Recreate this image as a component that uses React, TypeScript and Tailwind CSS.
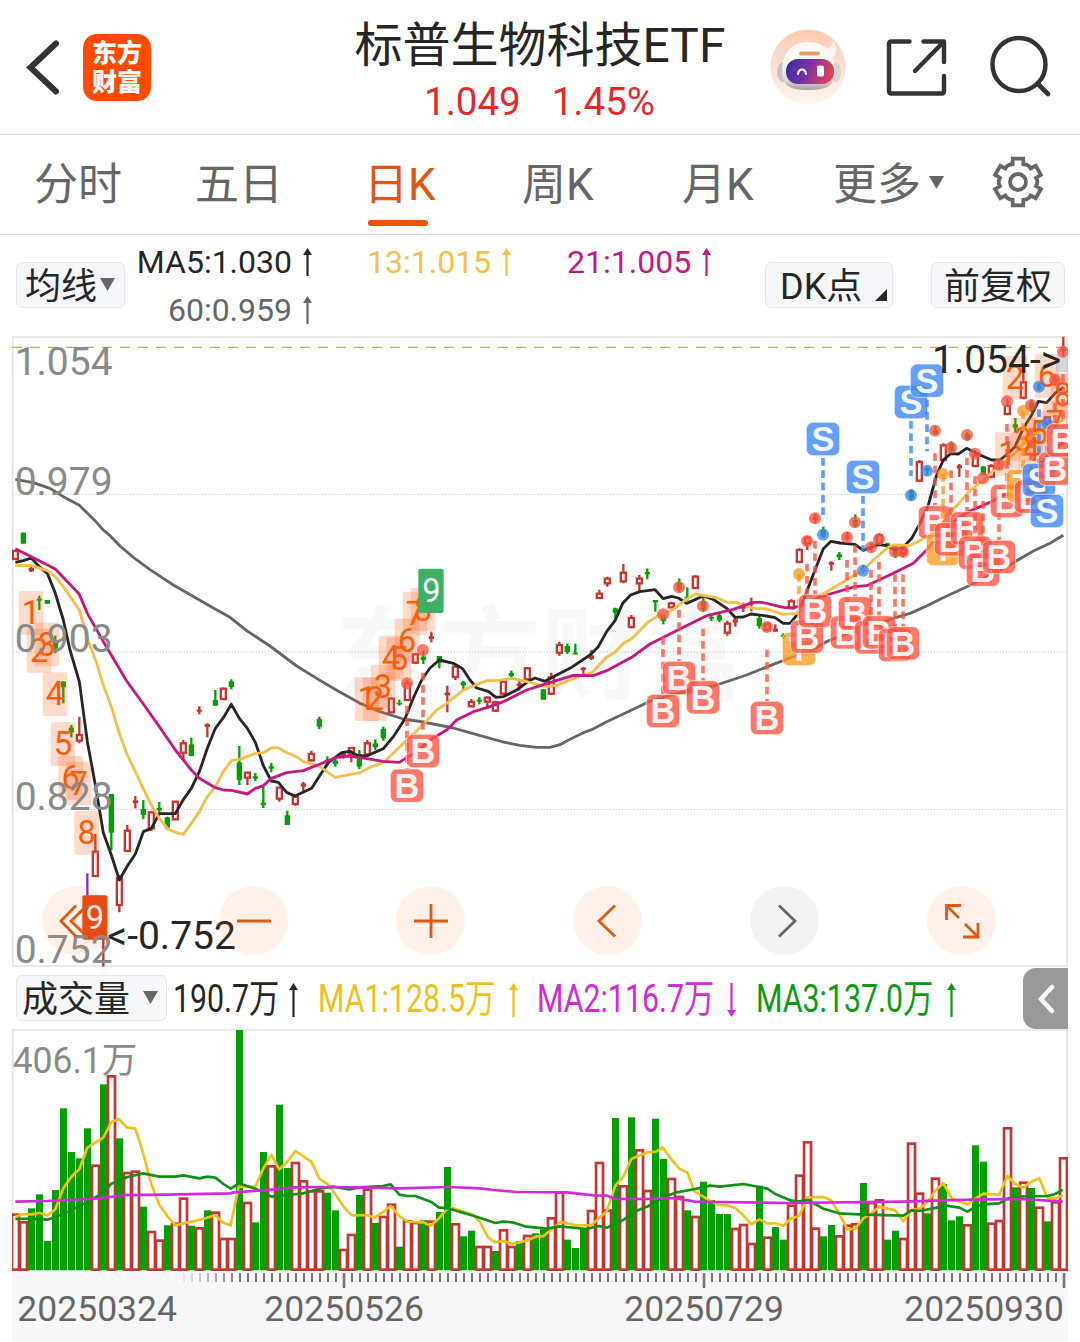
import React from "react";

type Tone = "R" | "G" | "P";

// Charts are drawn in thirds of a pixel, one bar every 24 units.
const barX = (i: number) => 46 + 24 * i;

const UP = "#c53532";
const DOWN = "#049f04";
const FONT = "Roboto, 'Noto Sans CJK SC', sans-serif";

// index, tone, high, low, body top, body bottom
const candles: [number, Tone, number, number, number, number][] = [
  [0, "R", 660, 690, 663, 687],
  [1, "G", 608, 641, 608, 641],
  [2, "R", 710, 726, 714, 724],
  [3, "G", 797, 840, 806, 812],
  [4, "G", 810, 821, 810, 821],
  [5, "G", 917, 970, 930, 955],
  [6, "G", 1053, 1120, 1055, 1072],
  [7, "G", 1185, 1222, 1193, 1207],
  [8, "R", 1160, 1240, 1215, 1232],
  [9, "P", 1630, 1697, 1660, 1660],
  [10, "R", 1512, 1640, 1565, 1638],
  [11, "R", 1820, 1910, 1850, 1852],
  [12, "G", 1392, 1560, 1392, 1508],
  [13, "R", 1635, 1747, 1645, 1725],
  [14, "R", 1485, 1565, 1502, 1563],
  [15, "R", 1398, 1435, 1411, 1419],
  [16, "G", 1410, 1467, 1437, 1455],
  [17, "R", 1445, 1503, 1447, 1495],
  [18, "G", 1416, 1452, 1434, 1441],
  [19, "G", 1460, 1499, 1462, 1495],
  [20, "R", 1413, 1470, 1415, 1468],
  [21, "R", 1230, 1290, 1240, 1268],
  [22, "G", 1223, 1279, 1243, 1278],
  [23, "R", 1129, 1153, 1139, 1145],
  [24, "R", 1180, 1222, 1182, 1191],
  [25, "G", 1080, 1127, 1110, 1127],
  [26, "R", 1073, 1110, 1076, 1107],
  [27, "G", 1048, 1078, 1054, 1071],
  [28, "G", 1248, 1365, 1297, 1350],
  [29, "R", 1325, 1365, 1328, 1343],
  [30, "G", 1329, 1353, 1339, 1346],
  [31, "G", 1367, 1434, 1418, 1425],
  [32, "G", 1299, 1327, 1309, 1316],
  [33, "R", 1370, 1415, 1373, 1406],
  [34, "G", 1442, 1485, 1456, 1485],
  [35, "R", 1398, 1427, 1400, 1422],
  [36, "R", 1356, 1387, 1360, 1370],
  [37, "R", 1262, 1294, 1272, 1291],
  [38, "G", 1160, 1197, 1167, 1190],
  [39, "G", 1279, 1305, 1289, 1296],
  [40, "G", 1285, 1310, 1292, 1302],
  [41, "R", 1266, 1286, 1270, 1280],
  [42, "R", 1251, 1297, 1254, 1274],
  [43, "G", 1260, 1317, 1272, 1310],
  [44, "R", 1230, 1276, 1240, 1273],
  [45, "G", 1228, 1260, 1240, 1252],
  [46, "G", 1190, 1232, 1197, 1225],
  [47, "R", 1102, 1150, 1106, 1147],
  [48, "G", 1109, 1127, 1118, 1123],
  [49, "R", 1050, 1112, 1060, 1110],
  [50, "R", 969, 1001, 973, 998],
  [51, "G", 962, 1002, 980, 990],
  [52, "R", 905, 937, 918, 927],
  [53, "G", 978, 1015, 978, 998],
  [54, "R", 1067, 1147, 1088, 1096],
  [55, "R", 1006, 1050, 1010, 1041],
  [56, "G", 1053, 1080, 1056, 1066],
  [57, "R", 1107, 1132, 1116, 1129],
  [58, "G", 1101, 1123, 1109, 1115],
  [59, "R", 1099, 1138, 1103, 1115],
  [60, "R", 1112, 1146, 1117, 1142],
  [61, "R", 1051, 1094, 1055, 1091],
  [62, "G", 1022, 1043, 1029, 1038],
  [63, "R", 1053, 1082, 1060, 1068],
  [64, "R", 1011, 1052, 1015, 1048],
  [66, "G", 1077, 1109, 1078, 1109],
  [67, "R", 1028, 1095, 1042, 1091],
  [68, "R", 935, 977, 945, 968],
  [69, "G", 941, 972, 948, 966],
  [70, "G", 941, 973, 968, 973],
  [71, "R", 1011, 1036, 1013, 1020],
  [72, "R", 960, 990, 976, 987],
  [73, "R", 779, 807, 791, 804],
  [74, "R", 740, 770, 746, 760],
  [75, "G", 833, 864, 835, 848],
  [76, "R", 702, 760, 728, 754],
  [77, "R", 855, 895, 864, 891],
  [78, "R", 735, 783, 746, 760],
  [79, "G", 715, 748, 726, 733],
  [80, "G", 810, 845, 810, 817],
  [81, "G", 845, 883, 855, 873],
  [82, "R", 815, 835, 820, 832],
  [83, "G", 745, 787, 757, 780],
  [84, "G", 772, 812, 800, 806],
  [85, "R", 736, 777, 740, 774],
  [86, "G", 798, 846, 815, 838],
  [87, "G", 852, 873, 861, 866],
  [88, "G", 850, 876, 856, 871],
  [89, "R", 872, 917, 881, 908],
  [90, "R", 862, 890, 868, 878],
  [91, "R", 818, 846, 830, 836],
  [92, "R", 803, 844, 815, 824],
  [93, "G", 856, 896, 864, 888],
  [94, "R", 878, 904, 882, 900],
  [95, "R", 883, 905, 896, 905],
  [96, "G", 910, 927, 915, 920],
  [97, "R", 808, 836, 814, 834],
  [98, "R", 655, 699, 660, 696],
  [99, "R", 618, 660, 624, 640],
  [100, "R", 552, 580, 560, 570],
  [101, "G", 590, 624, 600, 620],
  [102, "R", 694, 722, 696, 704],
  [103, "G", 666, 690, 673, 682],
  [104, "R", 606, 632, 616, 626],
  [105, "G", 553, 592, 570, 588],
  [106, "G", 704, 730, 714, 724],
  [107, "R", 640, 664, 648, 654],
  [108, "R", 610, 648, 616, 640],
  [109, "G", 638, 652, 640, 648],
  [110, "G", 650, 684, 654, 676],
  [111, "R", 648, 682, 658, 672],
  [112, "G", 478, 512, 482, 508],
  [113, "R", 390, 455, 396, 452],
  [114, "G", 410, 436, 414, 420],
  [115, "G", 288, 316, 300, 312],
  [116, "R", 340, 395, 346, 390],
  [117, "G", 334, 368, 340, 364],
  [118, "R", 402, 441, 406, 415],
  [119, "G", 306, 332, 312, 328],
  [120, "R", 360, 412, 376, 408],
  [121, "G", 408, 436, 410, 434],
  [122, "R", 403, 445, 408, 440],
  [123, "R", 395, 418, 400, 410],
  [124, "R", 205, 256, 228, 252],
  [125, "G", 264, 308, 283, 293],
  [126, "R", 95, 208, 157, 203],
  [127, "G", 208, 246, 216, 238],
  [128, "G", 158, 182, 170, 178],
  [129, "R", 260, 290, 262, 280],
  [130, "R", 136, 166, 146, 154],
  [131, "R", 20, 80, 55, 63],
];

const ma60 =
  "46,448 100,458 150,475 190,500 238,526 285,572 310,600 330,617 360,648 400,682 450,719 520,765 640,834 690,862 740,902 810,948 890,1008 960,1051 1010,1081 1080,1120 1140,1145 1210,1167 1270,1176 1360,1194 1430,1214 1510,1236 1560,1246 1610,1252 1650,1252 1680,1244 1700,1233 1750,1208 1775,1199 1820,1175 1870,1152 1950,1114 2020,1093 2150,1065 2240,1035 2320,1003 2380,980 2430,963 2480,935 2550,907 2680,865 2730,850 2780,828 2820,808 2910,766 3020,710 3050,692 3100,663 3150,640 3190,616";
const ma5 =
  "46,697 70,692 94,684 118,710 142,730 166,790 190,870 210,960 238,1055 262,1235 286,1365 310,1508 334,1575 358,1650 382,1608 406,1572 430,1505 454,1495 478,1451 526,1451 550,1409 574,1375 598,1325 622,1255 646,1195 670,1163 694,1123 718,1165 742,1195 766,1237 790,1307 814,1353 835,1357 860,1387 885,1398 935,1375 960,1336 985,1298 1025,1268 1050,1264 1075,1278 1100,1278 1150,1256 1180,1220 1215,1166 1240,1104 1265,1050 1290,1014 1318,990 1360,1000 1388,1016 1410,1050 1430,1074 1465,1084 1488,1102 1510,1100 1550,1080 1585,1054 1605,1044 1635,1054 1670,1035 1710,1015 1770,975 1795,950 1820,905 1845,872 1868,820 1892,795 1920,785 1965,779 1990,806 2015,799 2035,804 2060,820 2110,798 2140,808 2180,835 2205,862 2230,861 2253,852 2300,858 2325,863 2350,880 2370,880 2395,850 2420,785 2445,720 2470,656 2493,634 2520,639 2565,643 2590,661 2635,644 2660,647 2685,660 2710,652 2735,625 2760,580 2785,525 2810,435 2830,390 2852,371 2875,372 2900,355 2940,375 2975,390 3000,390 3025,370 3045,350 3070,295 3095,255 3115,214 3140,218 3165,190 3190,172";
const ma13 =
  "46,707 94,706 142,722 166,740 190,770 238,840 262,925 290,1000 310,1065 334,1130 358,1210 382,1275 406,1325 430,1377 454,1425 478,1465 502,1495 526,1507 550,1513 574,1480 598,1445 622,1400 646,1370 670,1325 694,1292 718,1288 766,1270 790,1268 814,1254 835,1253 860,1268 885,1278 910,1294 960,1310 1005,1342 1080,1328 1110,1312 1150,1298 1210,1240 1265,1188 1310,1140 1340,1120 1390,1080 1460,1052 1490,1052 1535,1045 1580,1055 1640,1070 1670,1066 1710,1050 1750,1035 1775,1028 1820,982 1845,967 1870,940 1895,926 1945,875 1970,860 2020,838 2050,815 2085,792 2150,803 2180,817 2210,818 2255,834 2300,837 2350,853 2390,850 2420,820 2480,785 2540,750 2590,720 2620,690 2660,655 2680,645 2730,646 2760,632 2800,605 2840,555 2875,522 2910,482 2950,450 3000,405 3040,375 3080,330 3140,290 3190,270";
const ma21 =
  "46,656 94,680 166,717 238,793 262,850 310,935 325,960 380,1053 430,1122 478,1190 526,1260 574,1320 598,1345 646,1373 670,1380 694,1381 742,1392 766,1375 790,1367 814,1345 860,1328 910,1322 960,1302 1010,1282 1050,1278 1100,1286 1150,1294 1198,1297 1250,1265 1290,1230 1340,1200 1370,1170 1420,1145 1470,1130 1510,1115 1580,1080 1630,1064 1720,1036 1780,1037 1820,1022 1895,982 1950,942 2050,892 2120,857 2200,838 2260,817 2285,817 2350,832 2380,834 2420,818 2480,795 2565,770 2600,767 2680,730 2740,700 2780,660 2820,610 2880,560 2910,543 2970,517 3020,490 3100,430 3140,380 3190,335";

const priceLines = [
  { points: ma60, color: "#666666" },
  { points: ma5, color: "#262626" },
  { points: ma13, color: "#f3bf4b" },
  { points: ma21, color: "#c5187f" },
];

type Kind = "B" | "S" | "T";
const kindColor: Record<Kind, string> = {
  B: "#fb5541",
  S: "#3a87f5",
  T: "#ff9b20",
};

// kind, bar index, dot y, badge y
const signals: [Kind, number, number, number][] = [
  ["B", 49, 1060, 1367],
  ["B", 51, 960, 1263],
  ["B", 81, 853, 1143],
  ["B", 83, 772, 1044],
  ["B", 86, 828, 1102],
  ["B", 94, 891, 1164],
  ["T", 98, 732, 957],
  ["B", 99, 633, 920],
  ["B", 100, 565, 843],
  ["S", 101, 614, 327],
  ["B", 104, 622, 907],
  ["B", 105, 577, 850],
  ["S", 106, 722, 441],
  ["B", 107, 652, 922],
  ["B", 108, 628, 907],
  ["B", 110, 665, 945],
  ["B", 111, 665, 940],
  ["S", 112, 496, 216],
  ["S", 114, 422, 152],
  ["B", 115, 302, 577],
  ["T", 116, 432, 657],
  ["B", 117, 353, 628],
  ["B", 119, 315, 595],
  ["B", 120, 371, 668],
  ["B", 121, 445, 719],
  ["B", 123, 404, 681],
  ["B", 124, 214, 513],
  ["T", 126, 243, 468],
  ["B", 127, 226, 500],
  ["S", 128, 170, 450],
  ["S", 129, 280, 543],
  ["B", 130, 150, 416],
  ["B", 131, 65, 331],
];

// digit, box left, box top
const counts: [string, number, number][] = [
  ["1", 56, 783],
  ["2", 80, 897],
  ["3", 104, 878],
  ["4", 128, 1027],
  ["5", 152, 1177],
  ["6", 175, 1278],
  ["7", 199, 1295],
  ["8", 223, 1443],
  ["1", 1064, 1042],
  ["2", 1088, 1042],
  ["3", 1112, 1004],
  ["4", 1136, 917],
  ["5", 1160, 922],
  ["6", 1184, 866],
  ["7", 1208, 785],
  ["8", 1232, 773],
  ["1", 2985, 307],
  ["2", 3008, 78],
  ["3", 3032, 263],
  ["4", 3056, 295],
  ["5", 3080, 243],
  ["6", 3104, 72],
  ["7", 3128, 212],
  ["8", 3152, 130],
];

// tone and top of each bar; the base line is at 931
const volumes =
  "R760 R783 G745 G703 G843 G690 G445 G576 G595 G505 R613 G373 R345 G535 R635 R631 G740 R812 R838 G796 R787 R712 G797 R801 G751 R754 R833 R833 G210 R725 G787 G576 R615 G434 G624 R605 R660 R690 R690 G698 G751 R866 R821 G705 R685 G789 R767 R730 G860 R780 R785 G781 R781 G756 G621 R789 G829 G812 R857 R857 G873 R807 R857 G843 R824 G820 G808 R771 R694 G839 G864 G805 R749 R605 R748 G474 R675 G472 R567 R689 G476 G597 R653 R707 G751 R767 G665 G720 G762 G762 R803 R791 R848 G677 R829 G801 G839 R733 R643 R543 R802 G829 G795 R825 R793 R789 G669 R725 R717 G839 G812 R833 R547 R697 G760 R652 G672 G781 G769 R792 G556 G605 R787 R779 R501 G682 R664 G684 R739 G784 R723 R591".split(
    " "
  );

const volumeLines = [
  {
    color: "#efc01c",
    points:
      "46,770 70,762 94,763 118,759 142,766 166,748 190,685 214,650 238,628 262,563 286,548 310,532 334,487 356,477 380,502 406,506 430,582 454,672 478,735 502,768 526,796 550,790 598,780 646,766 670,788 692,796 716,680 766,680 790,625 814,585 838,628 862,605 886,573 934,605 958,656 984,673 1008,706 1032,742 1056,766 1100,765 1124,773 1148,757 1172,738 1198,768 1222,785 1270,787 1292,797 1316,776 1340,748 1358,744 1420,765 1440,786 1464,832 1486,847 1510,843 1536,852 1580,842 1610,829 1630,829 1682,786 1730,796 1774,795 1820,754 1846,677 1870,650 1894,597 1942,577 1968,575 1988,562 2014,598 2038,626 2062,638 2084,695 2130,722 2160,735 2182,736 2206,744 2230,766 2254,793 2278,778 2302,790 2326,790 2350,797 2374,775 2398,768 2422,712 2470,711 2494,721 2518,762 2542,808 2566,806 2590,775 2614,760 2638,740 2686,752 2710,784 2734,750 2758,746 2782,727 2806,692 2830,669 2854,714 2878,725 2902,733 2926,716 2950,701 2998,704 3022,648 3046,672 3070,683 3094,665 3118,655 3142,713 3166,716 3188,706",
  },
  {
    color: "#0f8f14",
    points:
      "46,777 94,776 142,779 190,762 238,738 286,712 310,698 334,671 382,651 430,640 478,650 526,650 550,646 598,655 622,650 646,653 670,672 692,686 716,670 766,686 814,710 910,700 958,686 1000,680 1048,688 1080,682 1148,678 1172,673 1198,704 1222,708 1246,708 1294,726 1316,742 1348,746 1420,767 1486,789 1510,785 1536,787 1580,800 1640,806 1680,799 1760,807 1796,798 1822,803 1846,790 1870,780 1910,752 1946,738 1990,712 2030,697 2086,687 2130,677 2160,680 2230,672 2278,681 2302,686 2326,702 2374,722 2398,724 2424,720 2470,746 2518,760 2590,764 2710,767 2734,751 2758,753 2800,745 2838,737 2878,743 2902,755 2926,741 2950,733 2998,730 3022,716 3070,709 3142,708 3166,702 3188,689",
  },
  {
    color: "#d02bd6",
    points:
      "46,725 142,723 286,716 380,705 500,704 692,700 700,697 790,691 884,682 960,681 1080,682 1200,685 1350,681 1440,685 1480,690 1550,696 1700,697 1780,706 1822,707 1846,717 1940,717 2020,714 2086,725 2160,726 2360,729 2710,725 2830,721 2950,718 3070,717 3188,725",
  },
];

const dates = [
  { text: "20250324", x: 52 },
  { text: "20250526", x: 793 },
  { text: "20250729", x: 1873 },
  { text: "20250930", x: 2713 },
];

const Triangle: React.FC = () => (
  <svg width="15" height="13" viewBox="0 0 15 13">
    <path d="M0 0h15L7.5 13z" fill="#666" />
  </svg>
);

const Arrow: React.FC<{ height: number; down?: boolean }> = ({
  height,
  down = false,
}) => (
  <svg
    width="9"
    height={height}
    viewBox={`0 0 9 ${height}`}
    className={down ? "rotate-180" : ""}
  >
    <path d="M4.5 0L9 7H0z" fill="currentColor" />
    <path d={`M4.5 4V${height}`} stroke="currentColor" strokeWidth="2.2" />
  </svg>
);

const Robot: React.FC = () => (
  <svg width="76" height="76" viewBox="0 0 76 76">
    <defs>
      <linearGradient id="halo" x1="0" y1="0" x2="0" y2="1">
        <stop offset="0" stopColor="#fdc9ae" />
        <stop offset="1" stopColor="#fff6f1" />
      </linearGradient>
      <linearGradient id="visor" x1="0" y1="0" x2="1" y2="0.2">
        <stop offset="0" stopColor="#2f2fa4" />
        <stop offset="0.5" stopColor="#7a2fa8" />
        <stop offset="1" stopColor="#dc4358" />
      </linearGradient>
      <linearGradient id="shell" x1="0" y1="0" x2="0" y2="1">
        <stop offset="0.4" stopColor="#fbf8f6" />
        <stop offset="0.8" stopColor="#dcd6d6" />
        <stop offset="1" stopColor="#a9a1a3" />
      </linearGradient>
    </defs>
    <circle cx="38" cy="38" r="37.5" fill="url(#halo)" />
    <path d="M8 17c-1 7 2 12 8 13l6-9c-7 1-11 0-14-4z" fill="#e6dcd9" />
    <path d="M63 12c5 6 4 14-1 17l-9-9c6 0 9-3 10-8z" fill="#fbf5f2" />
    <ellipse cx="13" cy="43" rx="6" ry="10" fill="#c9c0c1" />
    <ellipse cx="66" cy="43" rx="5" ry="10" fill="#ddd4d4" />
    <path
      d="M38 13c17 0 27 11 27 29 0 14-7 19-27 19S12 56 12 42c0-18 10-29 26-29z"
      fill="url(#shell)"
    />
    <rect x="29" y="22.5" width="21" height="4" rx="2" fill="#e0a06c" />
    <rect x="16" y="30" width="48" height="25" rx="12" fill="url(#visor)" />
    <path
      d="M28 45c1-6 7-6 8 0"
      fill="none"
      stroke="#fff"
      strokeWidth="2.2"
      strokeLinecap="round"
    />
    <rect x="47" y="36.5" width="7" height="11" rx="2" fill="#fff" />
  </svg>
);

const Header: React.FC = () => (
  <header className="flex h-[135px] border-b border-[#d6d6d6]">
    <svg className="mt-[38px] ml-6 h-[60px] w-10" viewBox="0 0 40 60">
      <path
        d="M32 5.500L6.500 29.500L32 53.500"
        fill="none"
        stroke="#333"
        strokeWidth="6"
        strokeLinecap="round"
      />
    </svg>
    <div className="mt-[34px] ml-[19px] flex h-[67px] w-[68px] flex-col items-center justify-center rounded-[14px] bg-[#ff4a00] text-[25px] leading-[29px] font-black text-white">
      <span>东方</span>
      <span>财富</span>
    </div>
    <div className="ml-[173px] w-[432px] text-center">
      <h1 className="mt-[11px] text-[48px] leading-[70px] whitespace-nowrap text-[#262626]">
        标普生物科技ETF
      </h1>
      <p className="flex gap-[31px] pl-[100px] text-[38.5px] leading-[42px] text-[#dc2c2c]">
        <span>1.049</span>
        <span>1.45%</span>
      </p>
    </div>
    <div className="mt-[29px] ml-[14px] flex">
      <Robot />
      <svg className="ml-[40px] h-[60px] w-[62px] translate-y-2" viewBox="0 0 62 60">
        <path
          d="M23.500 4.500H5.500Q3 4.500 3 7V54Q3 56.500 5.500 56.500H55.500Q58 56.500 58 54V39M37.500 4.500H58V25M57.500 5L29 34"
          fill="none"
          stroke="#333"
          strokeWidth="4.400"
          strokeLinecap="round"
          strokeLinejoin="round"
        />
      </svg>
      <svg className="ml-[41px] h-[64px] w-[64px] translate-y-[6px]" viewBox="0 0 64 64">
        <circle cx="30" cy="29.500" r="26.500" fill="none" stroke="#333" strokeWidth="4.400" />
        <path d="M48.500 48.500L59 59" stroke="#333" strokeWidth="4.600" strokeLinecap="round" />
      </svg>
    </div>
  </header>
);

const Gear: React.FC = () => {
  const points: string[] = [];
  for (let k = 0; k < 6; k++) {
    const base = -90 + k * 60;
    [
      [-25, 19.3],
      [-17, 18.5],
      [-12.5, 24],
      [12.5, 24],
      [17, 18.5],
      [25, 19.3],
    ].forEach(([a, r]) => {
      const t = ((base + a) * Math.PI) / 180;
      points.push(`${28 + r * Math.cos(t)},${28 + r * Math.sin(t)}`);
    });
  }
  return (
    <svg width="56" height="56" viewBox="0 0 56 56" fill="none" stroke="#666" strokeWidth="3.8">
      <polygon points={points.join(" ")} />
      <circle cx="28" cy="28" r="8" />
    </svg>
  );
};

const Tabs: React.FC = () => (
  <nav className="flex h-[100px] border-b border-[#d6d6d6] text-[44px] leading-[100px] whitespace-nowrap text-[#666]">
    <span className="ml-[34px] w-[161px]">分时</span>
    <span className="w-[169px]">五日</span>
    <span className="flex w-[158px] flex-col text-[#e0560f]">
      <span className="h-[85px]">日K</span>
      <span className="ml-1 h-[6px] w-[60px] rounded-full bg-[#ea5504]" />
    </span>
    <span className="w-[160px]">周K</span>
    <span className="w-[151px]">月K</span>
    <span className="flex w-[157px] items-center">
      更多
      <span className="mb-1 ml-2">
        <Triangle />
      </span>
    </span>
    <span className="mt-[19px]">
      <Gear />
    </span>
  </nav>
);

const Pill: React.FC<{ className: string; children: React.ReactNode }> = ({
  className,
  children,
}) => (
  <div
    className={`flex h-[46px] items-center rounded-md border-[1.5px] border-[#e4e6ea] bg-[#f6f7fa] pt-[3px] text-[36px] leading-none whitespace-nowrap text-[#262626] ${className}`}
  >
    {children}
  </div>
);

const AverageRow: React.FC = () => (
  <div className="flex h-[101px] text-[32px] leading-[48px]">
    <Pill className="mt-[27px] ml-4 w-[109px] pl-2">
      均线
      <span className="mb-1 ml-[3px] flex">
        <Triangle />
      </span>
    </Pill>
    <div className="ml-[11px] flex w-[176px] flex-col items-end pt-[3px]">
      <span className="flex items-center gap-[11px] text-[#262626]">
        MA5:1.030 <Arrow height={28} />
      </span>
      <span className="flex items-center gap-[11px] text-[#666]">
        60:0.959 <Arrow height={28} />
      </span>
    </div>
    <span className="ml-[55px] flex h-[54px] items-center gap-[11px] text-[#f3bf4b]">
      13:1.015 <Arrow height={28} />
    </span>
    <span className="ml-[56px] flex h-[54px] items-center gap-[11px] text-[#c5187f]">
      21:1.005 <Arrow height={28} />
    </span>
    <Pill className="mt-[27px] ml-auto w-[128px] pl-[14px]">
      DK点
      <svg className="mt-4 ml-[13px]" width="12" height="12" viewBox="0 0 12 12">
        <path d="M12 0V12H0z" fill="#262626" />
      </svg>
    </Pill>
    <Pill className="mt-[27px] mr-[15px] ml-[38px] w-[134px] justify-center">
      前复权
    </Pill>
  </div>
);

const Candle: React.FC<{ data: [number, Tone, number, number, number, number] }> = ({
  data: [i, tone, high, low, top, bottom],
}) => {
  const x = barX(i);
  const color = tone === "R" ? UP : tone === "G" ? DOWN : "#7a2fd0";
  const hollow = tone === "R" && bottom - top > 11;
  return (
    <g stroke={color} strokeWidth="7">
      {hollow ? (
        <>
          <path d={`M${x} ${high}V${top}M${x} ${bottom}V${low}`} />
          <rect x={x - 7.500} y={top} width="15" height={bottom - top} fill="#fff" />
        </>
      ) : (
        <>
          <path d={`M${x} ${high}V${low}`} />
          {tone !== "P" && (
            <rect
              x={x - 8}
              y={top}
              width="16"
              height={bottom - top}
              fill={color}
              stroke="none"
            />
          )}
        </>
      )}
    </g>
  );
};

const Signal: React.FC<{ data: [Kind, number, number, number] }> = ({
  data: [kind, i, dot, badge],
}) => {
  const x = barX(i) - 1;
  const color = kindColor[kind];
  const from = badge > dot ? dot + (kind === "T" ? 0 : 68) : badge + 57;
  const to = badge > dot ? badge - 50 : dot - 58;
  return (
    <g>
      <path
        d={`M${x} ${from}V${to}`}
        stroke={color}
        strokeWidth="11"
        strokeDasharray="23 14"
        opacity="0.8"
      />
      <circle cx={x} cy={dot} r="18" fill={color} opacity="0.78" />
      <rect
        x={x - 50}
        y={badge - 50}
        width="100"
        height="100"
        rx="20"
        fill={color}
        fillOpacity="0.79"
        stroke="#fff"
        strokeOpacity="0.6"
        strokeWidth="3"
      />
      <text
        x={x}
        y={badge + 37}
        fontSize="103"
        fontWeight="700"
        fontFamily="'Liberation Sans', sans-serif"
        textAnchor="middle"
        fill="#fff"
        fillOpacity="0.92"
      >
        {kind}
      </text>
    </g>
  );
};

const PriceChart: React.FC = () => (
  <svg className="block h-[632px] w-[1056px]" viewBox="36 18 3168 1896" fontFamily={FONT}>
    <text
      x="1008"
      y="1085"
      fontSize="306"
      fontWeight="700"
      fill="#f8f8f8"
      textLength="1230"
    >
      东方财富
    </text>
    <path d="M38 1908V21H3201V1908Z" fill="none" stroke="#e2e2e2" strokeWidth="5" />
    <path
      d="M38 493H3200M38 966H3200M38 1438H3200"
      stroke="#c8c8c8"
      strokeWidth="3"
      strokeDasharray="4 5"
    />
    <path d="M36 52H3200" stroke="#c9a25f" strokeWidth="4" strokeDasharray="30 24" />
    {candles.map((c) => (
      <Candle key={c[0]} data={c} />
    ))}
    {priceLines.map((line) => (
      <polyline
        key={line.color}
        points={line.points}
        fill="none"
        stroke={line.color}
        strokeWidth="8.500"
        strokeLinejoin="round"
      />
    ))}
    {counts.map(([digit, x, y], i) => (
      <g key={i}>
        <rect x={x} y={y} width="74" height="131" rx="6" fill="#fb6a2a" opacity="0.25" />
        <text x={x + 37} y={y + 99} fontSize="98" textAnchor="middle" fill="#f95c0c">
          {digit}
        </text>
      </g>
    ))}
    <rect x="247" y="1696" width="75" height="133" rx="6" fill="#e64613" />
    <rect x="1255" y="716" width="76" height="133" rx="6" fill="#3eb065" />
    <g fontSize="98" fill="#fff" textAnchor="middle">
      <text x="285" y="1796">9</text>
      <text x="1294" y="815">9</text>
    </g>
    <rect x="3168" y="80" width="36" height="46" fill="#b9bcc6" opacity="0.6" />
    {signals.map((s) => (
      <Signal key={s[1]} data={s} />
    ))}
    <g fontSize="117" fill="#8a8a8a">
      <text x="44" y="136">1.054</text>
      <text x="44" y="494">0.979</text>
      <text x="44" y="966">0.903</text>
      <text x="44" y="1439">0.828</text>
      <text x="44" y="1899">0.752</text>
    </g>
    <g fontSize="117" fill="#262626">
      <text x="322" y="1857">&lt;-0.752</text>
      <text x="2796" y="129">1.054-&gt;</text>
    </g>
  </svg>
);

const controls = [
  { name: "first", path: "M-1-15.500L-16 0L-1 15.500M10-15.500L-6 0L10 15.500" },
  { name: "zoom out", path: "M-17 0H17" },
  { name: "zoom in", path: "M-17 0H17M0-17V17" },
  { name: "back", path: "M7-15.500L-9 0L7 15.500" },
  { name: "forward", path: "M-6-15.500L10 0L-6 15.500", muted: true },
  {
    name: "expand",
    path: "M-1-15.500H-15.500V-1M-15.500-15.500L-3-3M1 16H16V2M16 16L3 3",
  },
];

const Controls: React.FC = () => (
  <div className="absolute top-[550px] left-[30px] flex gap-[108px]">
    {controls.map((c) => (
      <button
        key={c.name}
        aria-label={c.name}
        className={`flex h-[69px] w-[69px] items-center justify-center rounded-full ${
          c.muted ? "bg-[#666]/8 text-[#666]" : "bg-[#ff6a20]/10 text-[#dc5a14]"
        }`}
      >
        <svg width="44" height="44" viewBox="-22 -22 44 44">
          <path d={c.path} fill="none" stroke="currentColor" strokeWidth="2.800" />
        </svg>
      </button>
    ))}
  </div>
);

const volumeStats = [
  { text: "190.7万", width: "w-[145px]", gap: "w-[116px]", color: "text-[#262626]" },
  { text: "MA1:128.5万", width: "w-[219px]", gap: "w-[191px]", color: "text-[#efc01c]" },
  { text: "MA2:116.7万", width: "w-[219px]", gap: "w-[190px]", color: "text-[#d02bd6]", down: true },
  { text: "MA3:137.0万", width: "w-[220px]", gap: "w-[191px]", color: "text-[#0b9b12]" },
];

const VolumeRow: React.FC = () => (
  <div className="flex h-[61px]">
    <Pill className="mt-[7px] ml-4 w-[151px] pl-[5px]">
      成交量
      <span className="mb-1 ml-[13px] flex">
        <Triangle />
      </span>
    </Pill>
    <div className="ml-[6px] flex items-center pt-[2px] text-[38.5px] leading-none whitespace-nowrap">
      {volumeStats.map((s) => (
        <div key={s.text} className={`flex items-center ${s.width} ${s.color}`}>
          <span className={`shrink-0 ${s.gap}`}>
            <span className="inline-block origin-left scale-x-[0.787]">{s.text}</span>
          </span>
          <span className="flex">
            <Arrow height={34} down={s.down} />
          </span>
        </div>
      ))}
    </div>
    <button
      aria-label="open panel"
      className="mr-3 ml-auto flex w-[45px] items-center justify-center rounded-l-[13px] bg-[#999]"
    >
      <svg width="18" height="30" viewBox="0 0 18 30">
        <path
          d="M15 3L4 15L15 27"
          fill="none"
          stroke="#fff"
          strokeWidth="4.500"
          strokeLinecap="round"
        />
      </svg>
    </button>
  </div>
);

const VolumeChart: React.FC = () => (
  <svg className="ml-3 block h-[243px] w-[1056px]" viewBox="36 207 3168 729" fontFamily={FONT}>
    <path d="M38 936V210H3201V936" fill="none" stroke="#e2e2e2" strokeWidth="5" />
    {volumes.map((v, i) => {
      const top = Number(v.slice(1));
      return v[0] === "G" ? (
        <rect key={i} x={barX(i) - 10} y={top} width="21" height={931 - top} fill={DOWN} />
      ) : (
        <rect
          key={i}
          x={barX(i) - 10}
          y={top + 4}
          width="21"
          height={925 - top}
          fill="#fff"
          stroke={UP}
          strokeWidth="8"
        />
      );
    })}
    {volumeLines.map((line) => (
      <polyline
        key={line.color}
        points={line.points}
        fill="none"
        stroke={line.color}
        strokeWidth="8"
        strokeLinejoin="round"
      />
    ))}
    <text x="38" y="340" fontSize="110" fill="#8a8a8a" textLength="374" lengthAdjust="spacingAndGlyphs">
      406.1万
    </text>
  </svg>
);

const DateAxis: React.FC = () => (
  <svg
    className="ml-3 block h-[70px] w-[1056px] bg-[#f7f7fa]"
    viewBox="36 936 3168 210"
    fontFamily={FONT}
  >
    {volumes.map((_, i) => {
      if (i < 21) return null;
      const major = i === 41 || i === 86 || i === 131;
      return (
        <path
          key={i}
          d={`M${barX(i) + 2} 939V${major ? 984 : 966}`}
          stroke="#777"
          strokeWidth={major ? 8 : 6}
          opacity={Math.min(1, (i - 20) / 8)}
        />
      );
    })}
    {dates.map((d) => (
      <text key={d.text} x={d.x} y="1082" fontSize="106.500" fill="#666">
        {d.text}
      </text>
    ))}
  </svg>
);

const App: React.FC = () => (
  <main className="h-[1342px] w-[1080px] overflow-hidden bg-white font-[Roboto,'Noto_Sans_CJK_SC',sans-serif]">
    <Header />
    <Tabs />
    <AverageRow />
    <section className="relative ml-3">
      <PriceChart />
      <Controls />
    </section>
    <VolumeRow />
    <VolumeChart />
    <DateAxis />
  </main>
);

export default App;
